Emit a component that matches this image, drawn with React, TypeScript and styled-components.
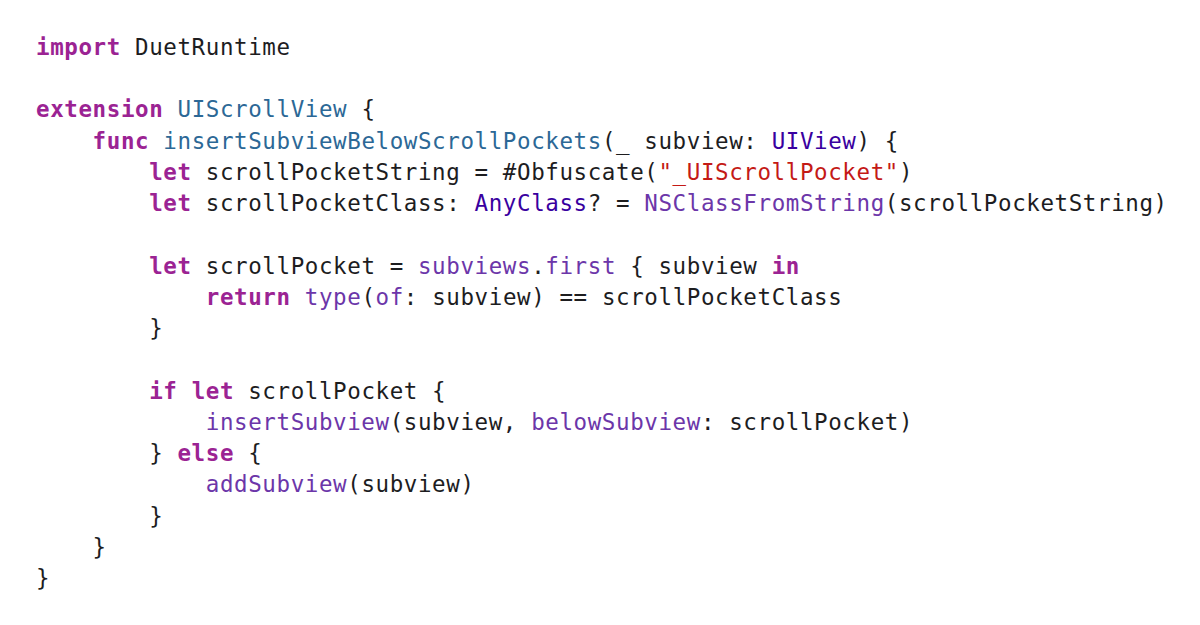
import React from "react";
import styled, { createGlobalStyle } from "styled-components";

const Global = createGlobalStyle`
  html, body { margin: 0; padding: 0; background: #ffffff; }
  body { font-family: "DejaVu Sans Mono", "Liberation Mono", monospace; }
`;

type Kind = "plain" | "kw" | "decl" | "cls" | "fn" | "str";

const colors: Record<Kind, string> = {
  plain: "#1d1d1f",
  kw: "#9b2393",
  decl: "#2c6896",
  cls: "#3900a0",
  fn: "#6c36a9",
  str: "#c41a16",
};

const Page = styled.main`
  padding: 32px 0 0 36px;
  background: #ffffff;
  min-height: 625px;
  box-sizing: border-box;
`;

const Code = styled.pre`
  margin: 0;
  font-family: "DejaVu Sans Mono", "Liberation Mono", monospace;
  font-size: 22.5px;
  letter-spacing: 0.6px;
  line-height: 31.24px;
  color: ${colors.plain};
  white-space: pre;
`;

const Line = styled.div`
  height: 31.24px;
`;

const Tok = styled.span<{ $kind: Kind }>`
  color: ${(p) => colors[p.$kind]};
  font-weight: ${(p) => (p.$kind === "kw" ? 700 : 400)};
`;

type T = [Kind, string];
const p = (s: string): T => ["plain", s];
const k = (s: string): T => ["kw", s];
const d = (s: string): T => ["decl", s];
const c = (s: string): T => ["cls", s];
const f = (s: string): T => ["fn", s];
const s = (x: string): T => ["str", x];

const lines: T[][] = [
  [k("import"), p(" DuetRuntime")],
  [],
  [k("extension"), p(" "), d("UIScrollView"), p(" {")],
  [p("    "), k("func"), p(" "), d("insertSubviewBelowScrollPockets"), p("(_ subview: "), c("UIView"), p(") {")],
  [p("        "), k("let"), p(" scrollPocketString = #Obfuscate("), s('"_UIScrollPocket"'), p(")")],
  [p("        "), k("let"), p(" scrollPocketClass: "), c("AnyClass"), p("? = "), f("NSClassFromString"), p("(scrollPocketString)")],
  [],
  [p("        "), k("let"), p(" scrollPocket = "), f("subviews"), p("."), f("first"), p(" { subview "), k("in")],
  [p("            "), k("return"), p(" "), f("type"), p("("), f("of"), p(": subview) == scrollPocketClass")],
  [p("        }")],
  [],
  [p("        "), k("if"), p(" "), k("let"), p(" scrollPocket {")],
  [p("            "), f("insertSubview"), p("(subview, "), f("belowSubview"), p(": scrollPocket)")],
  [p("        } "), k("else"), p(" {")],
  [p("            "), f("addSubview"), p("(subview)")],
  [p("        }")],
  [p("    }")],
  [p("}")],
];

export default function App() {
  return (
    <Page>
      <Global />
      <Code>
        {lines.map((toks, i) => (
          <Line key={i}>
            {toks.map(([kind, text], j) => (
              <Tok key={j} $kind={kind}>
                {text}
              </Tok>
            ))}
          </Line>
        ))}
      </Code>
    </Page>
  );
}
